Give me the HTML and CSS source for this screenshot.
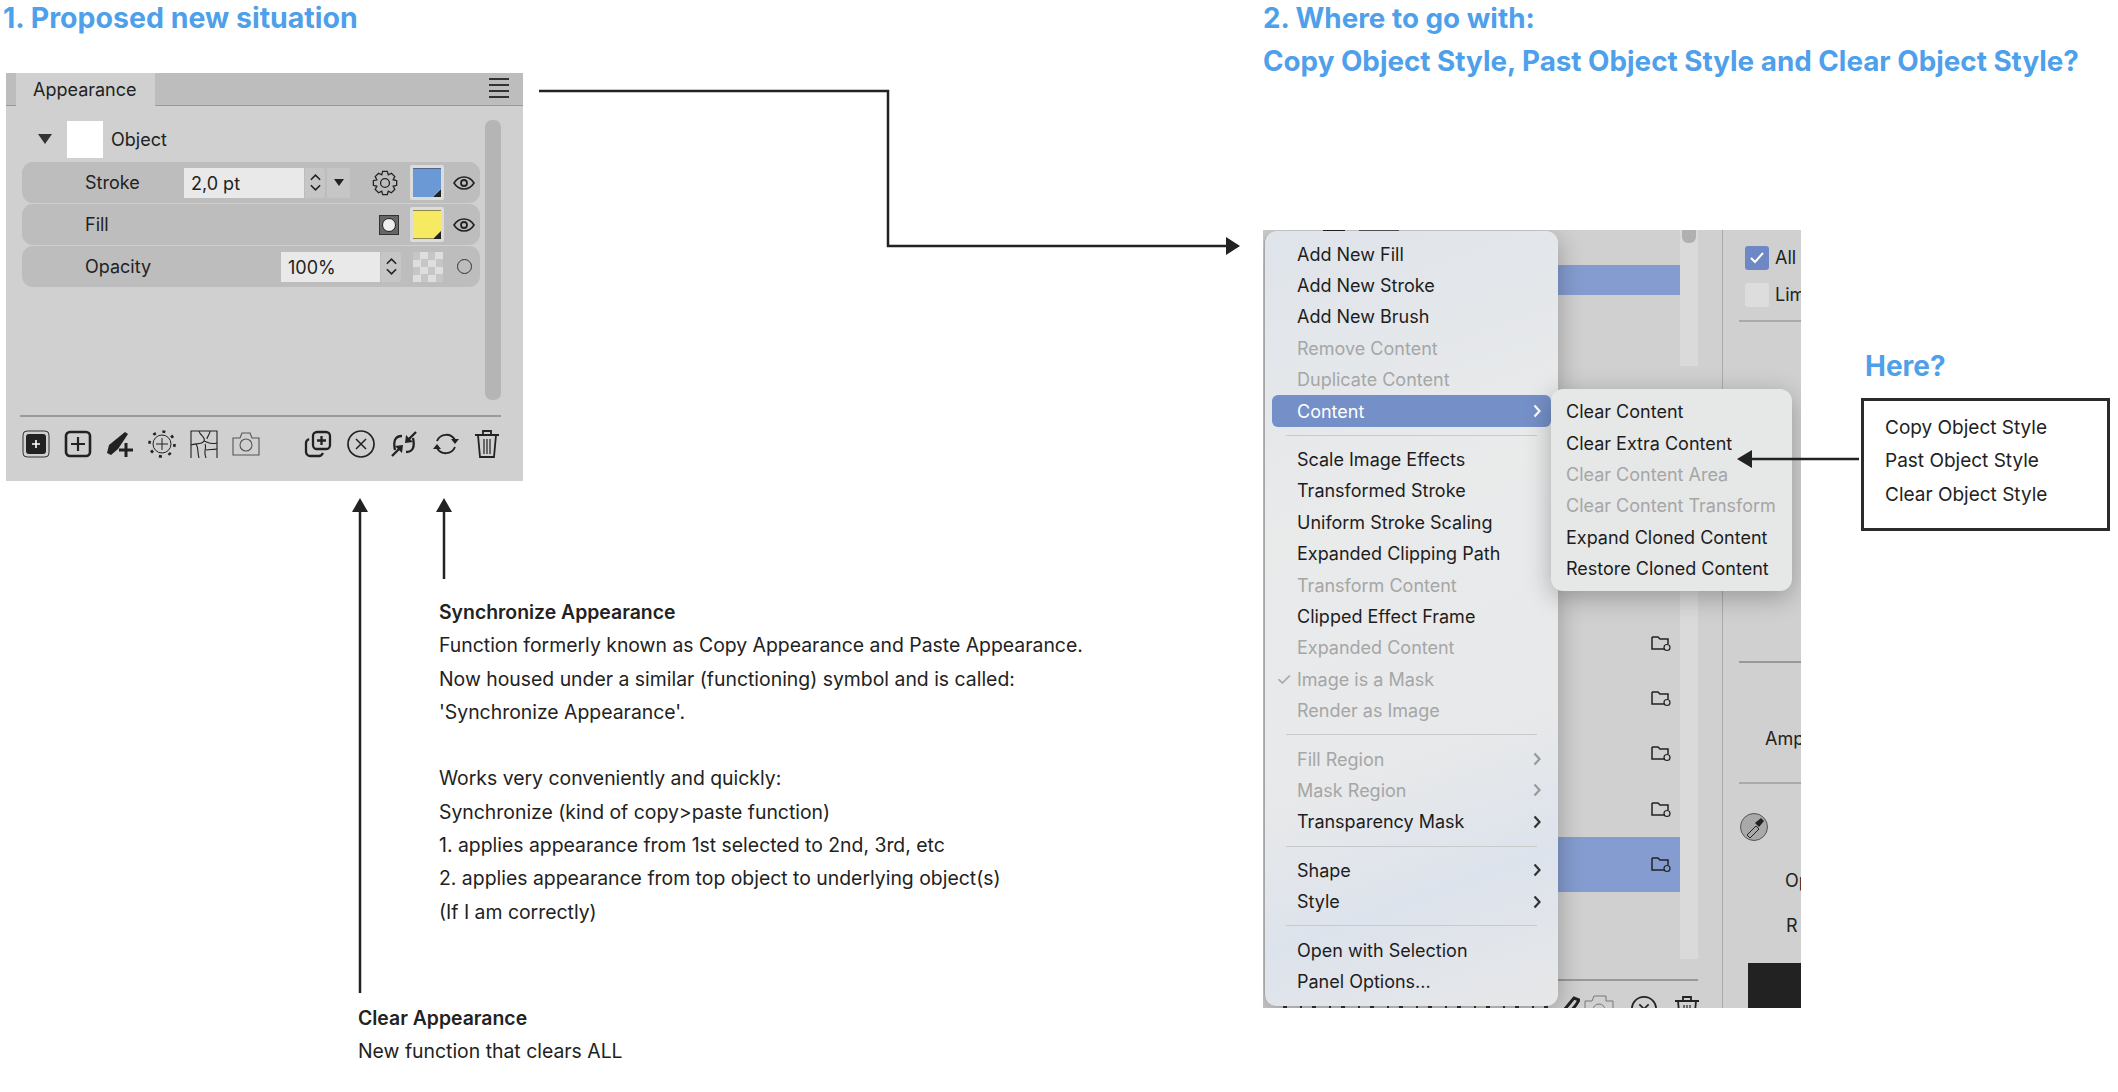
FILE: index.html
```html
<!DOCTYPE html>
<html lang="en">
<head>
    <meta charset="UTF-8">
    <title>Appearance panel proposal</title>
    <link rel="stylesheet" href="styles.css">
</head>
<body>
    <svg width="0" height="0" class="defs">
        <symbol id="folder" viewBox="0 0 20 18">
            <path d="M1 3h6l2 2h8v5M14 15H1V3" fill="none" stroke="#222" stroke-width="1.5"/>
            <circle cx="16" cy="13.5" r="3" fill="none" stroke="#222" stroke-width="1.2"/>
        </symbol>
        <symbol id="eye" viewBox="0 0 22 16">
            <path d="M1 8c5-8 15-8 20 0c-5 8-15 8-20 0z" fill="none" stroke="#222" stroke-width="1.6"/>
            <circle cx="11" cy="8" r="3" fill="none" stroke="#222" stroke-width="1.8"/>
        </symbol>
        <symbol id="stepper" viewBox="0 0 14 20">
            <path d="M2 7l5-5 5 5M2 13l5 5 5-5" fill="none" stroke="#222" stroke-width="1.7"/>
        </symbol>
        <symbol id="chev" viewBox="0 0 8 14">
            <path d="M1.500 1.500L6.500 7l-5 5.500" fill="none" stroke="currentColor" stroke-width="2.200"/>
        </symbol>
    </svg>

    <div class="page">
        <section class="left">
            <h2 class="title">1. Proposed new situation</h2>

            <div class="panel">
                <div class="tabbar">
                    <div class="tab">Appearance</div>
                    <div class="burger"><i></i><i></i><i></i><i></i></div>
                </div>
                <div class="panel-body">
                    <div class="rows">
                        <div class="object-row">
                            <span class="triangle"></span>
                            <span class="swatch-white"></span>
                            <span>Object</span>
                        </div>
                        <div class="row">
                            <span class="row-label">Stroke</span>
                            <span class="field field-stroke">2,0 pt</span>
                            <span class="stepper"><svg width="13" height="19"><use href="#stepper"/></svg></span>
                            <span class="dropdown"><span class="mini-tri"></span></span>
                            <svg class="gear" width="28" height="28" viewBox="0 0 24 24" fill="none" stroke="#222" stroke-width="1.100">
                                <circle cx="12" cy="12" r="3.800"/>
                                <path d="M10 2h4l.8 3 2.700-1.400 2.900 2.900L19 9.200l3 .8v4l-3 .8 1.400 2.700-2.900 2.900-2.700-1.400-.8 3h-4l-.8-3-2.700 1.400-2.900-2.900L5 14.800 2 14v-4l3-.8-1.400-2.700 2.900-2.900 2.700 1.400z"/>
                            </svg>
                            <span class="color-well"><span class="well-blue"></span></span>
                            <svg class="eye" width="22" height="16"><use href="#eye"/></svg>
                        </div>
                        <div class="row">
                            <span class="row-label">Fill</span>
                            <span class="spacer"></span>
                            <span class="mask-btn"><span></span></span>
                            <span class="color-well"><span class="well-yellow"></span></span>
                            <svg class="eye" width="22" height="16"><use href="#eye"/></svg>
                        </div>
                        <div class="row">
                            <span class="row-label">Opacity</span>
                            <span class="spacer"></span>
                            <span class="field field-opacity">100%</span>
                            <span class="stepper"><svg width="13" height="19"><use href="#stepper"/></svg></span>
                            <span class="checker"></span>
                            <span class="radio"></span>
                        </div>
                    </div>
                    <div class="scrollbar"></div>
                </div>
                <div class="toolbar">
                    <div class="tool-group">
                        <svg width="28" height="28" viewBox="0 0 28 28"><rect x="1" y="1" width="26" height="26" rx="4" fill="none" stroke="#333"/><rect x="4" y="4" width="20" height="20" rx="3" fill="#222"/><path d="M14 10v8M10 14h8" stroke="#fff" stroke-width="1.600"/></svg>
                        <svg width="28" height="28" viewBox="0 0 28 28" fill="none" stroke="#222"><rect x="2" y="2" width="24" height="24" rx="4" stroke-width="2.600"/><path d="M14 7v14M7 14h14" stroke-width="2.200"/></svg>
                        <svg width="28" height="28" viewBox="0 0 28 28"><path d="M1 23l2-8L19 2l3 2-10 15-7 6z" fill="#222"/><path d="M20 13v14M13 20h14" stroke="#222" stroke-width="3"/></svg>
                        <svg width="28" height="28" viewBox="0 0 28 28" fill="none" stroke="#222"><circle cx="14" cy="14" r="9"/><path d="M14 8v12M8 14h12"/><circle cx="14" cy="14" r="12.500" stroke-width="2.600" stroke-dasharray="3 6.820"/></svg>
                        <svg width="28" height="28" viewBox="0 0 28 28" fill="none" stroke="#222" stroke-width="1.100"><path d="M1 28V1h26v27"/><path d="M9 1c1 5 7 6 5 10s-9 2-13 4M14 11c4 1 6 4 13 2M6 14c3 4 1 8 3 14M15 14c2 4-2 7 1 14M16 20c4-1 6 0 11-1M20 1c0 4-3 5-3 8"/></svg>
                        <svg width="28" height="28" viewBox="0 0 28 28" fill="none" stroke="#555" stroke-width="1.100"><path d="M1 8h7l2-5h8l2 5h7v17H1z"/><circle cx="14" cy="15" r="6"/></svg>
                    </div>
                    <div class="tool-group">
                        <svg width="28" height="28" viewBox="0 0 28 28" fill="none" stroke="#222" stroke-width="2.300"><rect x="9" y="2" width="17" height="17" rx="4"/><path d="M17.500 6v9M13 10.500h9"/><path d="M5 9c-2 1-3 2-3 4v9c0 2 2 4 4 4h9c2 0 3-1 4-3"/></svg>
                        <svg width="30" height="30" viewBox="0 0 30 30" fill="none" stroke="#222" stroke-width="1.700"><circle cx="15" cy="15" r="13"/><path d="M10 10l10 10M20 10L10 20" stroke-width="1.500"/></svg>
                        <svg width="28" height="28" viewBox="0 0 28 28" fill="none" stroke="#222" stroke-width="2.300"><path d="M5 20C3 11 5 6 12 6M23 8c2 9 0 14-7 14"/><path d="M26 2l-7 7M2 26l7-7"/><path d="M15 13l1-8 7 7zM13 15l-1 8-7-7z" fill="#222" stroke="none"/></svg>
                        <svg width="28" height="28" viewBox="0 0 28 28" fill="none" stroke="#222" stroke-width="1.900"><path d="M5 11a10 10 0 0 1 18-1M23 17a10 10 0 0 1-18 1"/><path d="M19 9h8l-4 5zM1 19h8l-4-5z" fill="#222" stroke="none"/></svg>
                        <svg width="26" height="30" viewBox="0 0 26 30" fill="none" stroke="#222" stroke-width="1.800"><path d="M1 6h24M9 6V2h8v4M4 6l2 22h14l2-22"/><path d="M10 10v15M13 10v15M16 10v15" stroke-width="1.200"/></svg>
                    </div>
                </div>
            </div>

            <div class="note note-sync">
                <p><b>Synchronize Appearance</b></p>
                <p>Function formerly known as Copy Appearance and Paste Appearance.</p>
                <p>Now housed under a similar (functioning) symbol and is called:</p>
                <p>'Synchronize Appearance'.</p>
                <p>&nbsp;</p>
                <p>Works very conveniently and quickly:</p>
                <p>Synchronize (kind of copy&gt;paste function)</p>
                <p>1. applies appearance from 1st selected to 2nd, 3rd, etc</p>
                <p>2. applies appearance from top object to underlying object(s)</p>
                <p>(If I am correctly)</p>
            </div>
            <div class="note note-clear">
                <p><b>Clear Appearance</b></p>
                <p>New function that clears ALL</p>
            </div>
        </section>

        <section class="right">
            <h2 class="title">2. Where to go with:<br>Copy Object Style, Past Object Style and Clear Object Style?</h2>
            <div class="right-row">
                <div class="shot">
                    <div class="layers">
                        <div class="layer-list">
                            <div class="sel sel-top"></div>
                            <div class="folder-rows">
                                <div class="folder-row"><svg width="20" height="18"><use href="#folder"/></svg></div>
                                <div class="folder-row"><svg width="20" height="18"><use href="#folder"/></svg></div>
                                <div class="folder-row"><svg width="20" height="18"><use href="#folder"/></svg></div>
                                <div class="folder-row"><svg width="20" height="18"><use href="#folder"/></svg></div>
                                <div class="folder-row folder-sel"><svg width="20" height="18"><use href="#folder"/></svg></div>
                            </div>
                        </div>
                        <div class="track">
                            <div class="track-top"><span></span></div>
                            <div class="track-line"></div>
                            <div class="track-low"></div>
                            <div class="track-line track-line-end"></div>
                        </div>
                        <div class="layers-foot">
                            <svg width="22" height="24" viewBox="0 0 22 24"><path d="M2 20L16 3l5 2-3 5-10 12z" fill="none" stroke="#222" stroke-width="3"/></svg>
                            <svg width="30" height="26" viewBox="0 0 30 26" fill="none" stroke="#777"><path d="M1 6h7l2-5h12v5h7v20H1z"/><circle cx="15" cy="15" r="6"/></svg>
                            <svg width="28" height="28" viewBox="0 0 30 30" fill="none" stroke="#222" stroke-width="1.800"><circle cx="15" cy="15" r="13"/><path d="M10 10l10 10M20 10L10 20"/></svg>
                            <svg width="26" height="30" viewBox="0 0 26 30" fill="none" stroke="#222" stroke-width="1.800"><path d="M1 6h24M9 6V2h8v4M4 6l2 22h14l2-22"/><path d="M10 10v15M13 10v15M16 10v15" stroke-width="1.200"/></svg>
                        </div>
                    </div>
                    <div class="props">
                        <div class="check-row"><span class="check-on"><svg width="16" height="14" viewBox="0 0 16 14"><path d="M2 7l4 4 8-9" fill="none" stroke="#fff" stroke-width="2"/></svg></span>All</div>
                        <div class="check-row"><span class="check-off"></span>Lim</div>
                        <div class="props-line props-line-1"></div>
                        <div class="props-line props-line-2"></div>
                        <div class="props-label amp">Amp</div>
                        <div class="props-line props-line-3"></div>
                        <svg class="dropper" width="30" height="30" viewBox="0 0 30 30"><circle cx="15" cy="15" r="13.500" fill="#a9a9a9" stroke="#555"/><path d="M8 23l9-9 3 3-9 9z" fill="none" stroke="#222"/><path d="M16 11l6-5 3 3-5 6z" fill="#222"/></svg>
                        <div class="props-label op">Op</div>
                        <div class="props-label rr">R</div>
                        <div class="black-box"></div>
                    </div>

                    <div class="bits-top"></div>
                    <div class="bits-bottom"></div>

                    <div class="menu">
                        <div class="item">Add New Fill</div>
                        <div class="item">Add New Stroke</div>
                        <div class="item">Add New Brush</div>
                        <div class="item off">Remove Content</div>
                        <div class="item off">Duplicate Content</div>
                        <div class="item active">Content<svg class="chev" width="8" height="14"><use href="#chev"/></svg></div>
                        <div class="sep"></div>
                        <div class="item">Scale Image Effects</div>
                        <div class="item">Transformed Stroke</div>
                        <div class="item">Uniform Stroke Scaling</div>
                        <div class="item">Expanded Clipping Path</div>
                        <div class="item off">Transform Content</div>
                        <div class="item">Clipped Effect Frame</div>
                        <div class="item off">Expanded Content</div>
                        <div class="item off"><span class="tick">✓</span>Image is a Mask</div>
                        <div class="item off">Render as Image</div>
                        <div class="sep"></div>
                        <div class="item off">Fill Region<svg class="chev" width="8" height="14"><use href="#chev"/></svg></div>
                        <div class="item off">Mask Region<svg class="chev" width="8" height="14"><use href="#chev"/></svg></div>
                        <div class="item">Transparency Mask<svg class="chev" width="8" height="14"><use href="#chev"/></svg></div>
                        <div class="sep"></div>
                        <div class="item">Shape<svg class="chev" width="8" height="14"><use href="#chev"/></svg></div>
                        <div class="item">Style<svg class="chev" width="8" height="14"><use href="#chev"/></svg></div>
                        <div class="sep"></div>
                        <div class="item">Open with Selection</div>
                        <div class="item">Panel Options...</div>
                    </div>

                    <div class="submenu">
                        <div class="item">Clear Content</div>
                        <div class="item">Clear Extra Content</div>
                        <div class="item off">Clear Content Area</div>
                        <div class="item off">Clear Content Transform</div>
                        <div class="item">Expand Cloned Content</div>
                        <div class="item">Restore Cloned Content</div>
                    </div>
                </div>

                <div class="here">
                    <h3 class="here-title">Here?</h3>
                    <div class="here-box">
                        <p>Copy Object Style</p>
                        <p>Past Object Style</p>
                        <p>Clear Object Style</p>
                    </div>
                </div>
            </div>
        </section>

        <svg class="arrows" width="2118" height="1092" viewBox="0 0 2118 1092" fill="none" stroke="#222" stroke-width="2.500">
            <path d="M539 91H888V246H1228"/>
            <path d="M1240 246l-14-9v18z" fill="#222" stroke="none"/>
            <path d="M360 993V508"/>
            <path d="M360 498l-8 14h16z" fill="#222" stroke="none"/>
            <path d="M444 579V508"/>
            <path d="M444 498l-8 14h16z" fill="#222" stroke="none"/>
            <path d="M1859 459H1746"/>
            <path d="M1737 459l15-9v18z" fill="#222" stroke="none"/>
        </svg>
    </div>
</body>
</html>
```

FILE: styles.css
```css
* {
    box-sizing: border-box;
}
body {
    margin: 0;
    background: #fff;
    color: #222;
    font-family: 'Inter', 'Liberation Sans', sans-serif;
    overflow: hidden;
}
p {
    margin: 0;
}
.defs {
    position: absolute;
}
.page {
    position: relative;
    display: flex;
    width: 2118px;
    height: 1092px;
    overflow: hidden;
}
.left {
    position: relative;
    width: 1263px;
    flex: none;
}
.right {
    flex: 1;
}
.title {
    margin: -3px 0 0;
    color: #4fa0ea;
    font-size: 27.800px;
    font-weight: 700;
    line-height: 43px;
}
.left .title {
    padding-left: 3px;
    font-size: 28.500px;
    line-height: 42px;
}

/* appearance panel */
.panel {
    width: 517px;
    height: 408px;
    margin: 34px 0 0 6px;
    background: #cfd0cf;
    font-size: 18px;
    color: #222;
}
.tabbar {
    display: flex;
    justify-content: space-between;
    height: 33px;
    padding-left: 10px;
    padding-right: 14px;
    background: #bcbdbc;
    border-bottom: 1px solid #999;
}
.tab {
    width: 139px;
    height: 33px;
    padding-left: 17px;
    background: #cfd0cf;
    line-height: 33px;
}
.burger {
    display: flex;
    flex-direction: column;
    gap: 4px;
    padding-top: 5px;
}
.burger i {
    display: block;
    width: 20px;
    height: 2px;
    background: #333;
}
.panel-body {
    display: flex;
    height: 309px;
    padding-top: 14px;
    padding-left: 16px;
}
.rows {
    width: 458px;
}
.object-row {
    display: flex;
    align-items: center;
    height: 38px;
    margin-bottom: 4px;
    padding-left: 16px;
}
.triangle {
    width: 0;
    height: 0;
    border-left: 7px solid transparent;
    border-right: 7px solid transparent;
    border-top: 10px solid #333;
}
.swatch-white {
    width: 36px;
    height: 37px;
    margin: 0 8px 0 15px;
    background: #fff;
}
.row {
    display: flex;
    align-items: center;
    height: 41px;
    margin-bottom: 1px;
    padding-right: 5px;
    background: #bdbdbd;
    border-radius: 11px;
}
.row-label {
    width: 99px;
    padding-left: 63px;
    white-space: nowrap;
}
.row:nth-child(2) .row-label {
    width: 162px;
}
.spacer {
    flex: 1;
}
.field {
    display: block;
    height: 30px;
    padding-left: 7px;
    background: #e8e9e8;
    line-height: 32px;
}
.field-stroke {
    width: 120px;
}
.field-opacity {
    width: 99px;
}
.stepper {
    display: flex;
    align-items: center;
    justify-content: center;
    width: 20px;
    height: 30px;
    margin-left: 1px;
    background: #c6c6c6;
    border-radius: 0 3px 3px 0;
}
.dropdown {
    display: flex;
    align-items: center;
    justify-content: center;
    width: 23px;
    height: 30px;
    margin-left: 2px;
    background: #c6c6c6;
}
.mini-tri {
    width: 0;
    height: 0;
    border-left: 5px solid transparent;
    border-right: 5px solid transparent;
    border-top: 7px solid #222;
}
.gear {
    margin-left: 21px;
}
.color-well {
    position: relative;
    width: 34px;
    height: 35px;
    margin-left: 11px;
    padding: 3px;
    background: #dcdcdc;
    border-radius: 2px;
}
.color-well span {
    display: block;
    width: 28px;
    height: 29px;
    clip-path: polygon(0 0, 100% 0, 100% 70%, 70% 100%, 0 100%);
}
.color-well::after {
    content: "";
    position: absolute;
    right: 3px;
    bottom: 3px;
    border-left: 8px solid transparent;
    border-bottom: 8px solid #222;
}
.well-blue {
    background: #6a99d5;
    border-top: 1px solid #50678a;
}
.well-yellow {
    background: #f5ea62;
    border-top: 1px solid #8e8a4c;
    border-bottom: 1px solid #8e8a4c;
}
.eye {
    margin-left: 9px;
}
.mask-btn {
    display: flex;
    align-items: center;
    justify-content: center;
    width: 20px;
    height: 20px;
    background: #666;
    border: 1px solid #333;
}
.mask-btn span {
    width: 14px;
    height: 14px;
    border-radius: 50%;
    background: #eee;
    border: 1px solid #222;
}
.checker {
    width: 30px;
    height: 30px;
    margin-left: 12px;
    background: conic-gradient(#dedede 25%, #c6c6c6 0 50%, #dedede 0 75%, #c6c6c6 0) 0 0 / 15px 15px;
}
.radio {
    width: 15px;
    height: 15px;
    margin-left: 14px;
    margin-right: 3px;
    border: 1px solid #333;
    border-radius: 50%;
}
.scrollbar {
    width: 16px;
    height: 280px;
    margin-left: 5px;
    background: #b5b5b5;
    border-radius: 7px;
}
.toolbar {
    display: flex;
    justify-content: space-between;
    align-items: center;
    height: 65px;
    margin: 0 22px 0 14px;
    padding: 0 1px 9px 2px;
    border-top: 2px solid #999;
}
.tool-group {
    display: flex;
    align-items: center;
    gap: 14px;
}

/* notes */
.note {
    font-size: 19.400px;
    line-height: 33.300px;
    color: #222;
}
.note b {
    font-weight: 600;
}
.note-sync {
    margin: 115px 0 0 439px;
}
.note-clear {
    position: absolute;
    top: 1002px;
    left: 358px;
}

/* right part */
.right-row {
    display: flex;
    align-items: flex-start;
    margin-top: 147px;
}
.shot {
    position: relative;
    display: flex;
    width: 538px;
    height: 778px;
    flex: none;
    background: #cfd0cf;
    overflow: hidden;
    font-size: 18px;
}
.layers {
    position: relative;
    display: flex;
    width: 460px;
    flex: none;
    border-right: 1px solid #aaa;
}
.layer-list {
    width: 417px;
    padding-top: 35px;
    padding-left: 3px;
}
.sel {
    background: #859cd0;
}
.sel-top {
    height: 30px;
}
.folder-rows {
    margin-top: 320px;
}
.folder-row {
    display: flex;
    align-items: center;
    justify-content: flex-end;
    height: 55.400px;
    padding-right: 9px;
}
.folder-sel {
    background: #859cd0;
}
.track {
    width: 18px;
}
.track-top {
    height: 136px;
    background: #d9dad9;
}
.track-top span {
    display: block;
    width: 14px;
    height: 13px;
    margin-left: 2px;
    background: #b0b0b0;
    border-radius: 0 0 6px 6px;
}
.track-line {
    width: 140px;
    height: 2px;
    margin: 33px 0 0 -122px;
    background: #999;
}
.track-low {
    height: 558px;
    background: #d9dad9;
}
.track-line-end {
    margin-top: 20px;
}
.layers-foot {
    position: absolute;
    left: 295px;
    top: 765px;
    display: flex;
    gap: 16px;
    align-items: flex-start;
}
.layers-foot svg:first-child {
    margin-right: -12px;
}
.props {
    position: relative;
    flex: 1;
    overflow: hidden;
}
.check-row {
    display: flex;
    align-items: center;
    gap: 6px;
    height: 37px;
    padding-left: 22px;
}
.check-row:first-child {
    margin-top: 9px;
}
.check-on,
.check-off {
    display: flex;
    align-items: center;
    justify-content: center;
    width: 24px;
    height: 24px;
    flex: none;
    border-radius: 3px;
}
.check-on {
    background: #6e88c6;
}
.check-off {
    background: #dcdddc;
}
.props-line {
    height: 2px;
    margin-left: 16px;
    background: #aaa;
}
.props-line-1 {
    margin-top: 7px;
}
.props-line-2 {
    margin-top: 339px;
    background: #999;
}
.amp {
    margin: 64px 0 0 42px;
    line-height: 24px;
}
.props-line-3 {
    margin-top: 31px;
}
.dropper {
    display: block;
    margin: 28px 0 0 16px;
}
.op {
    margin: 27px 0 0 62px;
    line-height: 24px;
}
.rr {
    margin: 21px 0 0 63px;
    line-height: 24px;
}
.black-box {
    width: 60px;
    height: 60px;
    margin: 25px 0 0 25px;
    background: #222;
}
.bits-top {
    position: absolute;
    left: 60px;
    top: 0;
    width: 22px;
    height: 1px;
    background: #222;
    box-shadow: 36px 0 0 #555, 54px 0 0 #555;
}
.bits-bottom {
    position: absolute;
    left: 20px;
    bottom: 0;
    width: 270px;
    height: 3px;
    background: repeating-linear-gradient(90deg, #333 0 4px, transparent 4px 17px, #333 17px 19px, transparent 19px 29px);
}
.menu,
.submenu {
    position: absolute;
    z-index: 2;
    border-radius: 12px;
    box-shadow: 0 6px 26px rgba(0, 0, 0, 0.28);
}
.menu {
    left: 1px;
    top: 1px;
    width: 294px;
    height: 775px;
    padding: 7.500px 7px;
    background: linear-gradient(160deg, #dfe4eb 0%, #e9eaea 35%, #e8e9ea 65%, #dde3ec 82%, #e6e7e8 100%);
    border: 1px solid #a6a6a6;
    border-width: 0 0 0 1px;
}
.submenu {
    left: 288px;
    top: 159px;
    z-index: 3;
    width: 241px;
    padding: 7px;
    background: #e6e7e7;
}
.item {
    position: relative;
    display: flex;
    align-items: center;
    justify-content: space-between;
    height: 31.400px;
    padding-left: 25px;
    padding-right: 10px;
    white-space: nowrap;
    color: #1d1d1d;
}
.submenu .item {
    padding-left: 8px;
}
.off {
    color: #a5a6a6;
}
.active {
    background: #7590c8;
    border-radius: 6px;
    color: #fff;
}
.tick {
    position: absolute;
    left: 4px;
}
.sep {
    height: 17px;
    padding-top: 8px;
    margin: 0 14px;
}
.sep::after {
    content: "";
    display: block;
    height: 1px;
    background: #c8c9cb;
}
.chev {
    color: #333;
}
.active .chev {
    color: #fff;
}
.off .chev {
    color: #999;
}
.here {
    margin: 119px 0 0 60px;
}
.here-title {
    margin: 0 0 15px 4px;
    color: #4fa0ea;
    font-size: 28px;
    font-weight: 700;
    line-height: 34px;
}
.here-box {
    width: 249px;
    height: 133px;
    padding: 10px 0 0 21px;
    border: 3px solid #2b2b2b;
    font-size: 19px;
    line-height: 33.400px;
}
.arrows {
    position: absolute;
    left: 0;
    top: 0;
    z-index: 5;
    pointer-events: none;
}
```
